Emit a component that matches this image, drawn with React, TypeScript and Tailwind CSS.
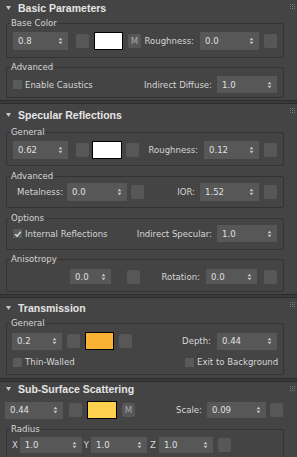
import type { ReactNode } from 'react'

const Arrows = () => (
  <svg width="5" height="8" viewBox="0 0 5 8" className="shrink-0">
    <path d="M0.5 3.3 L2.5 0.8 L4.5 3.3 Z M0.5 4.7 L2.5 7.2 L4.5 4.7 Z" fill="#c4c4c4" />
  </svg>
)

function Spinner({ value, className = '' }: { value: string; className?: string }) {
  return (
    <div className={`flex shrink-0 items-center justify-between bg-[#575757] pl-[5px] pr-[5px] ${className}`}>
      <span className="text-[#e0e0e0]">{value}</span>
      <Arrows />
    </div>
  )
}

function Square({ className = '' }: { className?: string }) {
  return <div className={`h-[14px] w-[13px] shrink-0 rounded-[2px] bg-[#575757] ${className}`} />
}

function Swatch({ color, className = '' }: { color: string; className?: string }) {
  return <div className={`h-[18px] shrink-0 border border-black ${color} ${className}`} />
}

function MButton({ className = '' }: { className?: string }) {
  return (
    <div className={`flex h-[14px] w-[13px] shrink-0 items-center justify-center rounded-[2px] bg-[#575757] text-[9.5px] text-[#a8a8a8] ${className}`}>
      M
    </div>
  )
}

function Check({ label, checked = false }: { label: string; checked?: boolean }) {
  return (
    <div className="flex items-center whitespace-nowrap">
      <div className="flex h-[9px] w-[9px] shrink-0 items-center justify-center bg-[#5a5a5a]">
        {checked && (
          <svg width="8" height="8" viewBox="0 0 8 8">
            <path d="M1.2 4.2 L3.1 6.2 L6.8 1.6" stroke="#e0e0e0" strokeWidth="1.4" fill="none" />
          </svg>
        )}
      </div>
      <span className="ml-[3px] text-[#d6d6d6]">{label}</span>
    </div>
  )
}

function Group({ label, className = '', children }: { label: string; className?: string; children: ReactNode }) {
  return (
    <fieldset className={`ml-[6px] mr-[13px] rounded-[2px] border border-[#333333] px-[6px] ${className}`}>
      <legend className="ml-[-3px] h-[12px] px-[1px] leading-[12px] text-[#d4d4d4]">{label}</legend>
      {children}
    </fieldset>
  )
}

const Grip = () => (
  <svg width="5" height="6" viewBox="0 0 5 6" className="shrink-0">
    {[0, 2, 4].map((y) => (
      <g key={y}>
        <rect x="0" y={y} width="1" height="1" fill="#7a7a7a" />
        <rect x="2" y={y} width="1" height="1" fill="#7a7a7a" />
        <rect x="4" y={y} width="1" height="1" fill="#7a7a7a" />
      </g>
    ))}
  </svg>
)

function Header({ title, className = '' }: { title: string; className?: string }) {
  return (
    <div className={`flex items-center pl-[6px] pr-[2px] ${className}`}>
      <svg width="5" height="4" viewBox="0 0 5 4" className="shrink-0">
        <path d="M0 0 L5 0 L2.5 4 Z" fill="#c8c8c8" />
      </svg>
      <span
        className="ml-[7px] text-[10.5px] font-bold text-[#e4e4e4]"
        style={{ fontFamily: '"Liberation Sans", Arial, sans-serif' }}
      >
        {title}
      </span>
      <div className="ml-auto self-start pt-[4px]">
        <Grip />
      </div>
    </div>
  )
}

const Separator = () => <div className="h-[4px] border-y border-[#2c2c2c] bg-[#3a3a3a]" />

export default function App() {
  return (
    <div
      className="h-[457px] w-[297px] overflow-hidden bg-[#444444] text-[9.5px] leading-[12px] text-[#d6d6d6]"
      style={{ fontFamily: '"DejaVu Sans Condensed", "Liberation Sans", Arial, sans-serif' }}
    >
      {/* Basic Parameters */}
      <div className="pb-[2px]">
        <Header title="Basic Parameters" className="h-[16px]" />
        <Group label="Base Color" className="mt-[1px] pb-[7px]">
          <div className="mt-[3px] flex h-[18px] items-center">
            <Spinner value="0.8" className="h-[18px] w-[55px]" />
            <Square className="ml-[8px]" />
            <Swatch color="bg-white" className="ml-[5px] w-[29px]" />
            <MButton className="ml-[5px]" />
            <span className="ml-auto">Roughness:</span>
            <Spinner value="0.0" className="ml-[6px] h-[18px] w-[59px]" />
            <Square className="ml-[5px]" />
          </div>
        </Group>
        <Group label="Advanced" className="mt-[3px] pb-[4px]">
          <div className="mt-[3px] flex h-[17px] items-center">
            <Check label="Enable Caustics" />
            <span className="ml-auto">Indirect Diffuse:</span>
            <Spinner value="1.0" className="ml-[5px] h-[17px] w-[60px]" />
          </div>
        </Group>
      </div>
      <Separator />

      {/* Specular Reflections */}
      <div className="pb-[2px]">
        <Header title="Specular Reflections" className="h-[22px]" />
        <Group label="General" className="pb-[6px]">
          <div className="mt-[3px] flex h-[18px] items-center">
            <Spinner value="0.62" className="h-[18px] w-[55px]" />
            <Square className="ml-[8px]" />
            <Swatch color="bg-white" className="ml-[3px] w-[30px]" />
            <Square className="ml-[4px]" />
            <span className="ml-auto">Roughness:</span>
            <Spinner value="0.12" className="ml-[6px] h-[18px] w-[55px]" />
            <Square className="ml-[5px]" />
          </div>
        </Group>
        <Group label="Advanced" className="mt-[4px] pb-[6px]">
          <div className="mt-[1px] flex h-[18px] items-center">
            <span className="ml-[4px]">Metalness:</span>
            <Spinner value="0.0" className="ml-[4px] h-[18px] w-[60px]" />
            <Square className="ml-[4px]" />
            <span className="ml-auto">IOR:</span>
            <Spinner value="1.52" className="ml-[5px] h-[18px] w-[59px]" />
            <Square className="ml-[5px]" />
          </div>
        </Group>
        <Group label="Options" className="mt-[4px] pb-[7px]">
          <div className="mt-[1px] flex h-[17px] items-center">
            <Check label="Internal Reflections" checked />
            <span className="ml-auto">Indirect Specular:</span>
            <Spinner value="1.0" className="ml-[5px] h-[17px] w-[60px]" />
          </div>
        </Group>
        <Group label="Anisotropy" className="mt-[3px] pb-[7px]">
          <div className="mt-[4px] flex h-[15px] items-center">
            <Spinner value="0.0" className="ml-[57px] h-[15px] w-[41px]" />
            <Square className="ml-[16px]" />
            <span className="ml-auto">Rotation:</span>
            <Spinner value="0.0" className="ml-[6px] h-[15px] w-[51px]" />
            <Square className="ml-[7px]" />
          </div>
        </Group>
      </div>
      <Separator />

      {/* Transmission */}
      <div className="pb-[3px]">
        <Header title="Transmission" className="h-[19px]" />
        <Group label="General" className="pb-[6px]">
          <div className="mt-[3px] flex h-[18px] items-center">
            <Spinner value="0.2" className="ml-[-1px] h-[17px] w-[50px]" />
            <Square className="ml-[5px]" />
            <Swatch color="bg-[#f9b233]" className="ml-[5px] w-[29px]" />
            <Square className="ml-[5px]" />
            <span className="ml-auto">Depth:</span>
            <Spinner value="0.44" className="ml-[6px] h-[17px] w-[60px]" />
          </div>
          <div className="mt-[6px] flex h-[12px] items-center">
            <Check label="Thin-Walled" />
            <div className="ml-auto w-[92px]">
              <Check label="Exit to Background" />
            </div>
          </div>
        </Group>
      </div>
      <Separator />

      {/* Sub-Surface Scattering */}
      <div>
        <Header title="Sub-Surface Scattering" className="h-[14px]" />
        <div className="mt-[5px] flex h-[18px] items-center pl-[5px] pr-[14px]">
          <Spinner value="0.44" className="h-[17px] w-[58px]" />
          <Square className="ml-[6px]" />
          <Swatch color="bg-[#fdd04e]" className="ml-[5px] w-[30px]" />
          <MButton className="ml-[5px]" />
          <span className="ml-auto">Scale:</span>
          <Spinner value="0.09" className="ml-[5px] h-[16px] w-[59px]" />
          <Square className="ml-[4px]" />
        </div>
        <Group label="Radius" className="mt-[4px] pb-[6px]">
          <div className="mt-[2px] flex h-[16px] items-center">
            <span className="ml-[-1px]">X</span>
            <Spinner value="1.0" className="ml-[2px] h-[16px] w-[62px]" />
            <span className="ml-[2px]">Y</span>
            <Spinner value="1.0" className="ml-[2px] h-[16px] w-[56px]" />
            <span className="ml-[3px]">Z</span>
            <Spinner value="1.0" className="ml-[3px] h-[16px] w-[54px]" />
            <Square className="ml-[5px]" />
          </div>
        </Group>
      </div>
    </div>
  )
}
